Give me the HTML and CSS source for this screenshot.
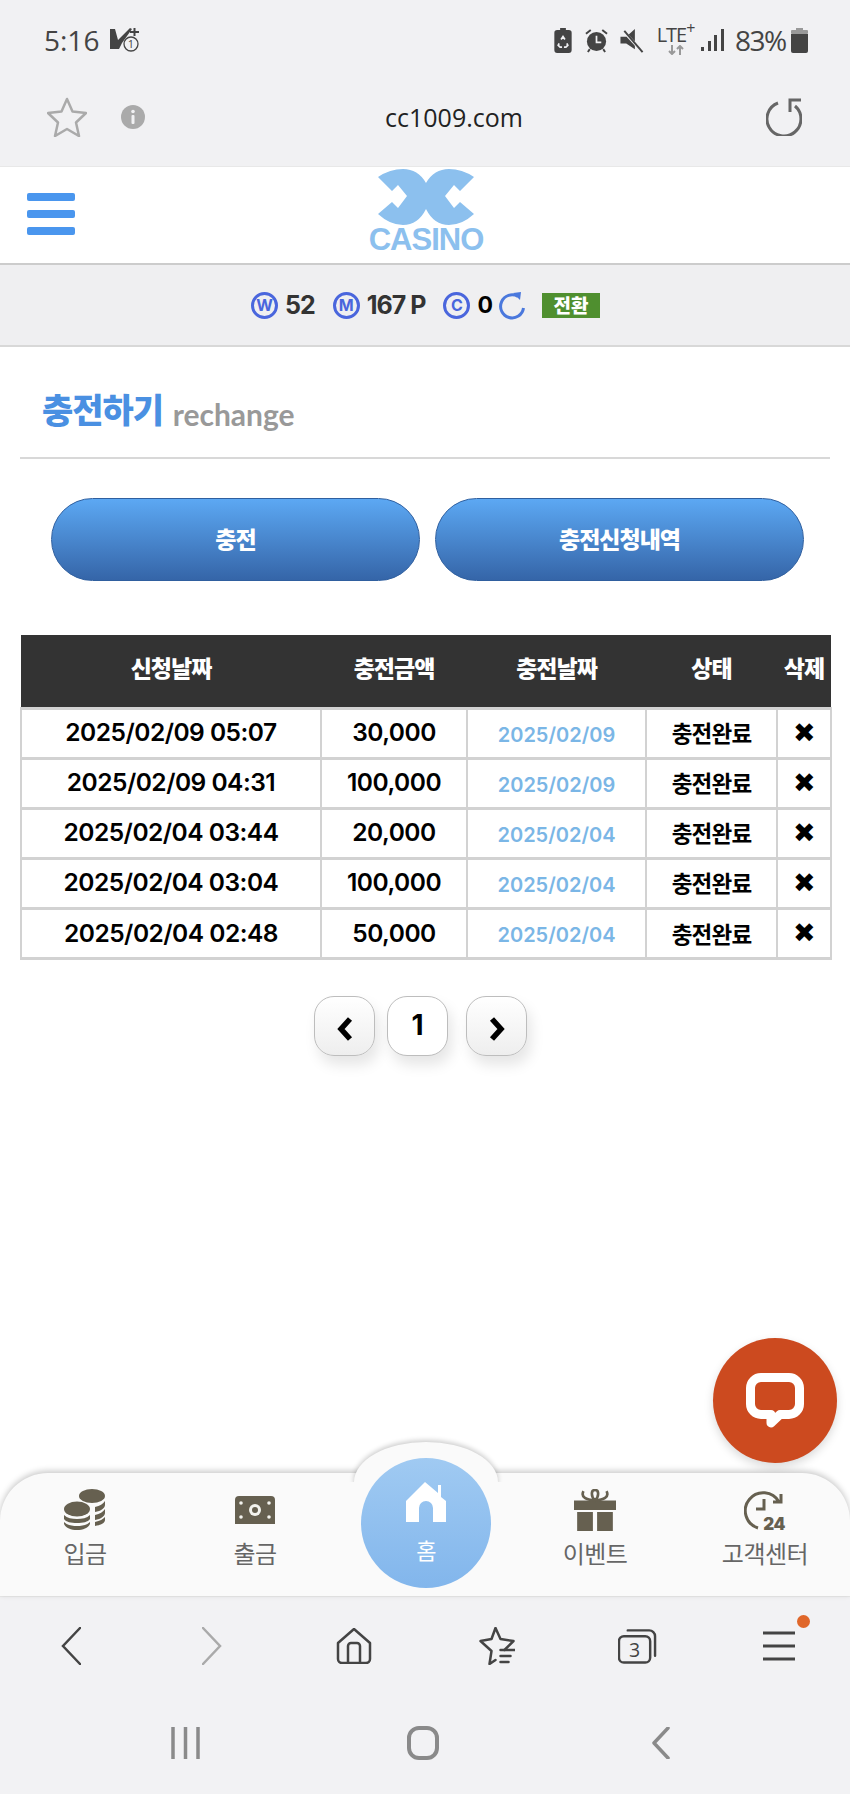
FILE: index.html
```html
<!DOCTYPE html>
<html lang="ko">
<head>
<meta charset="utf-8">
<title>충전하기</title>
<link rel="stylesheet" href="styles.css">
</head>
<body>
<div class="screen">
  <div class="status">
    <div class="status-left">
      <span class="clock">5:16</span>
      <svg class="i-volte" viewBox="0 0 30 24"><path class="dk" d="M0 1h5l3 11L20 0l2 1-10 14-3 6H0z"/><path class="ln" d="M20 4h9M24.500 0v8"/><circle class="ln-thin" cx="21" cy="16" r="7"/><text x="21" y="20" class="t-one">1</text></svg>
    </div>
    <div class="status-right">
      <svg class="i-bat-rec" viewBox="0 0 18 26"><path class="dk" d="M6 0h6v2h3a3 3 0 0 1 3 3v18a3 3 0 0 1-3 3H3a3 3 0 0 1-3-3V5a3 3 0 0 1 3-3h3z"/><path class="wh-ln" d="M7 12l2-3 2 3M5 16l-1 2 2 2h2M13 16l1 2-2 2h-2"/></svg>
      <svg class="i-alarm" viewBox="0 0 24 26"><circle class="dk" cx="12" cy="14" r="10"/><path class="wh-ln" d="M12 8v7h5"/><path class="ln" d="M1 6l5-4M23 6l-5-4M5 22l-2 3M19 22l2 3"/></svg>
      <svg class="i-mute" viewBox="0 0 24 26"><path class="dk" d="M0 9h6l9-8v21l-9-6H0z"/><path class="ln-bg" d="M1 1l22 24"/><path class="ln" d="M4 3l19 22"/></svg>
      <div class="lte"><span class="lte-t">LTE<sup>+</sup></span><svg class="lte-a" viewBox="0 0 16 10"><path d="M4 0v9M1 6l3 3 3-3M12 10V1M9 4l3-3 3 3"/></svg></div>
      <svg class="i-signal" viewBox="0 0 23 22"><rect class="dk" x="0" y="18" width="3" height="4"/><rect class="dk" x="7" y="12" width="3" height="10"/><rect class="dk" x="13" y="6" width="3" height="16"/><rect class="dk" x="20" y="0" width="3" height="22"/></svg>
      <span class="pct">83%</span>
      <svg class="i-bat" viewBox="0 0 17 25"><path class="gy" d="M5 0h7v3H5z"/><rect class="gy" y="2" width="17" height="4" rx="1"/><path class="dk" d="M0 6h17v17a2 2 0 0 1-2 2H2a2 2 0 0 1-2-2z"/></svg>
    </div>
  </div>

  <div class="address">
    <svg class="i-star" viewBox="0 0 40 40"><path d="M20 2l5.500 12.500 13.500 1.500-10 9.500 3 13.500-12-7-12 7 3-13.500-10-9.500 13.500-1.500z"/></svg>
    <svg class="i-info" viewBox="0 0 24 24"><circle cx="12" cy="12" r="12"/><circle class="info-dot" cx="12" cy="6.500" r="1.800"/><rect class="info-dot" x="10.500" y="10" width="3" height="9" rx="1"/></svg>
    <div class="url">cc1009.com</div>
    <svg class="i-reload" viewBox="0 0 36 38"><path d="M12 5A17 17 0 1 0 29 8M35 2H24v12"/></svg>
  </div>

  <header class="site-head">
    <button class="burger" aria-label="메뉴"><i></i><i></i><i></i></button>
    <div class="logo">
      <svg class="logo-mark" viewBox="0 0 96 56"><path d="M0 8Q12 0 25 0 40 0 48 14 56 0 71 0 84 0 96 8L82 22 76 16 67 27 76 39 82 33 96 45Q84 56 71 56 56 56 48 40 40 56 25 56 12 56 0 45L14 33 20 39 29 27 20 16 14 22Z"/></svg>
      <div class="logo-text">CASINO</div>
    </div>
  </header>

  <div class="balance">
    <span class="coin">W</span><b class="amt">52</b>
    <span class="coin c2">M</span><b class="amt">167 P</b>
    <span class="coin c2">C</span><b class="amt zero">0</b>
    <svg class="i-swap" viewBox="0 0 28 28"><path class="swap-a" d="M20 4.500A11.500 11.500 0 1 0 25.500 16"/><path class="swap-h" d="M15 1l8-1-1 8z"/></svg>
    <span class="convert">전환</span>
  </div>

  <main class="content">
    <h1 class="title">충전하기 <small>rechange</small></h1>
    <div class="tabs">
      <a class="tab">충전</a>
      <a class="tab">충전신청내역</a>
    </div>
    <table class="history">
      <colgroup>
        <col class="c-a"><col class="c-b"><col class="c-c"><col class="c-d"><col class="c-e">
      </colgroup>
      <thead>
        <tr><th>신청날짜</th><th>충전금액</th><th>충전날짜</th><th>상태</th><th>삭제</th></tr>
      </thead>
      <tbody>
        <tr><td>2025/02/09 05:07</td><td>30,000</td><td class="d">2025/02/09</td><td class="s">충전완료</td><td class="x">✖</td></tr>
        <tr><td>2025/02/09 04:31</td><td>100,000</td><td class="d">2025/02/09</td><td class="s">충전완료</td><td class="x">✖</td></tr>
        <tr><td>2025/02/04 03:44</td><td>20,000</td><td class="d">2025/02/04</td><td class="s">충전완료</td><td class="x">✖</td></tr>
        <tr><td>2025/02/04 03:04</td><td>100,000</td><td class="d">2025/02/04</td><td class="s">충전완료</td><td class="x">✖</td></tr>
        <tr><td>2025/02/04 02:48</td><td>50,000</td><td class="d">2025/02/04</td><td class="s">충전완료</td><td class="x">✖</td></tr>
      </tbody>
    </table>
    <nav class="pager">
      <a class="pg"><svg class="chev" viewBox="0 0 16 26"><path d="M13 3L4 13l9 10"/></svg></a>
      <a class="pg on">1</a>
      <a class="pg"><svg class="chev" viewBox="0 0 16 26"><path d="M3 3l9 10-9 10"/></svg></a>
    </nav>
  </main>

  <a class="chat" aria-label="채팅"><svg viewBox="0 0 58 56"><path d="M15 4.500h28A10.500 10.500 0 0 1 53.500 15v16A10.500 10.500 0 0 1 43 41.500H34L25 50V41.500h-10A10.500 10.500 0 0 1 4.500 31V15A10.500 10.500 0 0 1 15 4.500z"/></svg></a>

  <nav class="dock">
    <div class="bump"></div>
    <a class="dock-item">
      <svg class="dock-i" viewBox="0 0 42 42"><ellipse class="br" cx="28" cy="7" rx="13" ry="7"/><path class="br" d="M41 12v4c0 3-4 6-10 7v-5c5-1 8-3 10-6zM41 20v4c0 3-4 6-10 7v-5c5-1 8-3 10-6zM41 28v3c0 3-4 5-10 6v-4c5-1 8-3 10-5z"/><ellipse class="br" cx="13" cy="20" rx="13" ry="7.500"/><path class="br" d="M0 26c3 3 8 4 13 4s10-1 13-4v4c-2 3-7 4-13 4S2 33 0 30zM0 33c3 3 8 4 13 4s10-1 13-4v2c-2 4-7 6-13 6S2 39 0 35z"/></svg>
      <span>입금</span>
    </a>
    <a class="dock-item">
      <svg class="dock-i money" viewBox="0 0 40 28"><path class="br" d="M4 0h32a4 4 0 0 1 4 4v24H0V4a4 4 0 0 1 4-4z"/><circle class="bill" cx="20" cy="14" r="6"/><circle class="br" cx="20" cy="14" r="3"/><circle class="bill" cx="6" cy="7" r="1.800"/><circle class="bill" cx="34" cy="7" r="1.800"/><circle class="bill" cx="6" cy="21" r="1.800"/><circle class="bill" cx="34" cy="21" r="1.800"/></svg>
      <span>출금</span>
    </a>
    <a class="dock-item home">
      <svg class="home-i" viewBox="0 0 40 40"><path d="M19 0L32 11V3h3v12l5 4v21H27V26a7 7 0 0 0-14 0v14H0V19z"/></svg>
      <span>홈</span>
    </a>
    <a class="dock-item after-home">
      <svg class="dock-i" viewBox="0 0 40 40"><path class="br" d="M0 11h40v9H0zM3 22h15v18H3zM22 22h15v18H22z"/><path class="ln-br" d="M20 11C12 10 6 8 9 2M20 11c8-1 14-3 11-9M20 11c-4-4-4-10 0-10s4 6 0 10z"/></svg>
      <span>이벤트</span>
    </a>
    <a class="dock-item">
      <svg class="dock-i clock-i" viewBox="0 0 42 47"><path class="ln-br2" d="M14 39A18 18 0 1 1 35 13M29 13h8V5M20 10v10h-8"/><text x="30" y="41" class="t-24">24</text></svg>
      <span>고객센터</span>
    </a>
  </nav>

  <div class="browser">
    <div class="tools">
      <svg class="i-back" viewBox="0 0 20 38"><path d="M19 1L2 19l17 18"/></svg>
      <svg class="i-back off" viewBox="0 0 20 38"><path d="M1 1l17 18L1 37"/></svg>
      <svg class="tool-i" viewBox="0 0 36 36"><path d="M2 15L18 1l16 14v16a4 4 0 0 1-4 4H6a4 4 0 0 1-4-4zM12 35V18a3 3 0 0 1 3-3h6a3 3 0 0 1 3 3v17"/></svg>
      <svg class="tool-i wide" viewBox="0 0 38 38"><path d="M19 1l5 11 13 2-9 9M13 37l2-13-11-10 11-2 4-11M15 24l-2 13 6-4"/><path d="M24 23h14M24 29h10M24 35h8"/></svg>
      <svg class="tool-i wide" viewBox="0 0 40 36"><rect x="1" y="8" width="32" height="27" rx="5"/><path d="M10 2h22a6 6 0 0 1 6 6v20"/><text x="17" y="29" class="t-three">3</text></svg>
      <div class="menu-w">
        <svg class="i-menu" viewBox="0 0 32 30"><path d="M0 2h32M0 15h32M0 28h32"/></svg>
        <i class="dot"></i>
      </div>
    </div>
    <div class="softkeys">
      <svg class="k-recents" viewBox="0 0 29 32"><path d="M2 0v32M14.500 0v32M27 0v32"/></svg>
      <svg class="k-home" viewBox="0 0 32 34"><rect x="2" y="2" width="28" height="30" rx="10"/></svg>
      <svg class="k-back" viewBox="0 0 18 32"><path d="M16 1L2 16l14 15"/></svg>
    </div>
  </div>
</div>
</body>
</html>
```

FILE: styles.css
```css
* { box-sizing: border-box; }
html, body { margin: 0; padding: 0; background: #fff; }
body { font-family: "Noto Sans CJK KR", "Noto Sans", sans-serif; color: #000; }
a { color: inherit; text-decoration: none; }
svg { display: block; flex: none; }

.screen { position: relative; width: 850px; height: 1794px; overflow: hidden; display: flex; flex-direction: column; }

.dk { fill: #444; }
.gy { fill: #999; }
.ln { fill: none; stroke: #444; stroke-width: 2; }
.ln-thin { fill: #f1f1f3; stroke: #444; stroke-width: 1.300; }
.ln-bg { fill: none; stroke: #f1f1f3; stroke-width: 3; }
.wh-ln { fill: none; stroke: #f1f1f3; stroke-width: 1.800; }

/* status bar */
.status { height: 80px; background: #f1f1f3; display: flex; justify-content: space-between; align-items: center; padding: 0 42px 0 44px; }
.status-left { display: flex; align-items: center; gap: 10px; }
.status-right { display: flex; align-items: center; }
.clock { font: 400 28px/1 "Open Sans", sans-serif; color: #444; width: 56px; white-space: nowrap; }
.pct { font: 400 28px/1 "Open Sans", sans-serif; color: #444; width: 51px; margin-right: 5px; white-space: nowrap; letter-spacing: -1.500px; }
.i-volte { width: 30px; height: 24px; }
.t-one { font: 400 11px "Open Sans", sans-serif; fill: #444; text-anchor: middle; }
.i-bat-rec { width: 18px; height: 25px; margin-right: 13px; }
.i-alarm { width: 23px; height: 25px; margin-right: 12px; }
.i-mute { width: 24px; height: 25px; margin-right: 11px; }
.lte { width: 41px; margin-right: 5px; display: flex; flex-direction: column; align-items: center; color: #444; }
.lte-t { font: 400 20px/18px "Open Sans", sans-serif; letter-spacing: -1px; white-space: nowrap; }
.lte-t sup { font-size: 16px; line-height: 0; }
.lte-a { width: 16px; height: 10px; margin-top: 1px; }
.lte-a path { fill: none; stroke: #999; stroke-width: 2; }
.i-signal { width: 23px; height: 22px; margin-right: 11px; }
.i-bat { width: 17px; height: 25px; }

/* address bar */
.address { height: 86px; background: #f1f1f3; display: grid; grid-template-columns: 40px 24px 1fr 36px; column-gap: 34px; align-items: center; padding: 0 48px 12px 47px; }
.i-star { width: 40px; height: 40px; }
.i-star path { fill: none; stroke: #aaa; stroke-width: 2.500; stroke-linejoin: round; }
.i-info { width: 24px; height: 24px; }
.i-info circle:first-child { fill: #aaa; }
.info-dot { fill: #f1f1f3; }
.url { font: 500 25px/1 "Open Sans", sans-serif; color: #222; text-align: center; padding-right: 3px; }
.i-reload { width: 36px; height: 38px; }
.i-reload path { fill: none; stroke: #666; stroke-width: 3; }

/* site header */
.site-head { height: 99px; background: #fff; border-bottom: 2px solid #ccc; border-top: 1px solid #e8e8e8; display: flex; position: relative; padding-left: 27px; align-items: center; }
.burger { border: 0; padding: 0; background: none; width: 48px; display: flex; flex-direction: column; gap: 9px; margin-top: -2px; }
.burger i { display: block; height: 8px; background: #4a96ee; border-radius: 2px; }
.logo { width: 114px; margin-left: 294px; display: flex; flex-direction: column; align-items: center; gap: 3px; margin-top: -11px; }
.logo-mark { width: 96px; height: 56px; }
.logo-mark path { fill: #8cc0ee; }
.logo-text { font: 700 31px/23px "Liberation Sans", sans-serif; color: #8cc0ee; letter-spacing: -1px; white-space: nowrap; }

/* balance */
.balance { height: 82px; background: #efeff1; border-bottom: 2px solid #d8d8d8; display: flex; align-items: center; padding-left: 251px; padding-top: 1px; }
.coin { width: 27px; height: 27px; border: 3px solid #4a66dd; border-radius: 50%; color: #4a66dd; font: 700 16px/21px "Inter", sans-serif; text-align: center; margin-right: 7px; }
.c2 { margin-left: 18px; }
.amt { font: 700 25px/1 "Inter", sans-serif; color: #333; white-space: nowrap; letter-spacing: -1px; }
.zero { color: #000; margin-right: 6px; font-size: 23px; }
.i-swap { width: 28px; height: 28px; }
.swap-a { fill: none; stroke: #4a78dd; stroke-width: 3; }
.swap-h { fill: #4a78dd; }
.convert { margin-left: 16px; width: 58px; height: 25px; background: #4f8f2f; color: #fff; font-weight: 900; font-size: 19px; line-height: 24px; text-align: center; }

/* content */
.content { flex: 1; padding: 0 20px; background: #fff; min-height: 0; }
.title { margin: 0; height: 112px; border-bottom: 2px solid #d8d8d8; padding: 40px 0 0 22px; font-size: 34px; font-weight: 900; line-height: 44px; color: #4a90e2; letter-spacing: -1px; white-space: nowrap; }
.title small { font: 700 30px/44px "Lato", sans-serif; color: #999; letter-spacing: 0; margin-left: 1px; position: relative; top: 3px; }
.tabs { display: flex; gap: 15px; padding: 39px 26px 0 31px; }
.tab { flex: 1; height: 83px; border: 1px solid #2f5f9f; border-radius: 42px; background: linear-gradient(#5ca8f3, #3565a8); color: #fff; font-size: 23px; font-weight: 900; line-height: 79px; text-align: center; letter-spacing: -1px; }

.history { width: 810px; margin-top: 54px; table-layout: fixed; border-collapse: collapse; }
.c-a { width: 300px; } .c-b { width: 146px; } .c-c { width: 179px; } .c-d { width: 131px; } .c-e { width: 54px; }
.history th { height: 73px; background: #333; color: #fff; font-size: 23px; font-weight: 900; letter-spacing: -1px; padding: 0 0 8px; white-space: nowrap; }
.history td { height: 50.200px; border-style: solid; border-color: #d2d2d2; border-width: 3px 2px; background: #fff; text-align: center; font: 600 24.500px/1 "Inter", sans-serif; color: #000; padding: 0 0 2px; white-space: nowrap; letter-spacing: -.5px; }
.history td.d { font: 600 20px/1 "Inter", sans-serif; color: #7ab6e6; padding: 3px 0 0; letter-spacing: 0; }
.history td.s { font: 700 22.500px/1 "Noto Sans CJK KR", sans-serif; letter-spacing: -.8px; }
.history td.x { font: 400 27px/1 "DejaVu Sans", sans-serif; }

.pager { display: flex; justify-content: center; gap: 12px; margin-top: 36px; padding-right: 9px; }
.pg { width: 61px; height: 60px; border: 1px solid #bdbdbd; border-radius: 20px; background: linear-gradient(#fff, #eee); box-shadow: 4px 9px 14px rgba(0,0,0,.1); display: flex; align-items: center; justify-content: center; font: 700 28px/1 "Inter", sans-serif; padding-bottom: 3px; }
.pg.on { background: #fff; }
.pg + .pg + .pg { margin-left: 6px; }
.chev { width: 16px; height: 26px; margin-top: 9px; }
.chev path { fill: none; stroke: #000; stroke-width: 5.500; }

/* floating chat */
.chat { position: absolute; left: 713px; top: 1338px; width: 124px; height: 125px; border-radius: 50%; background: #cc4a1f; box-shadow: 0 4px 10px rgba(0,0,0,.15); display: flex; align-items: center; justify-content: center; }
.chat svg { width: 58px; height: 56px; }
.chat path { fill: none; stroke: #fff; stroke-width: 9; stroke-linejoin: round; }

/* dock */
.dock { position: relative; height: 123px; background: #fafafa; border-radius: 48px 48px 0 0; box-shadow: 0 -2px 6px rgba(0,0,0,.22); display: grid; grid-template-columns: repeat(5, 170px); }
.bump { position: absolute; left: 354px; top: -31px; width: 144px; height: 80px; border-radius: 50%; background: #fafafa; box-shadow: 0 -2px 5px rgba(0,0,0,.2); clip-path: inset(-10px -10px 40px -10px); }
.dock-item { position: relative; display: flex; flex-direction: column; align-items: center; padding-top: 16px; font-size: 24px; line-height: 30px; color: #666; white-space: nowrap; }
.after-home { grid-column-start: 4; }
.dock-item span { position: absolute; top: 65px; letter-spacing: -.5px; }
.dock-i { width: 42px; height: 42px; }
.dock-i.clock-i { height: 47px; }
.money { width: 40px; height: 28px; margin-top: 7px; }
.br { fill: #666050; }
.bill { fill: #f3f3ee; }
.ln-br { fill: none; stroke: #666050; stroke-width: 2.500; }
.ln-br2 { fill: none; stroke: #666050; stroke-width: 3; }
.t-24 { font: 900 17px "Inter", sans-serif; fill: #666050; text-anchor: middle; letter-spacing: -.5px; }
.home { position: absolute; left: 361px; top: -15px; width: 130px; height: 130px; border-radius: 50%; background: linear-gradient(#a0caf2, #82b6ec); color: #fff; padding-top: 24px; }
.dock-item.home span { top: 76px; font-size: 22px; }
.home-i { width: 40px; height: 40px; }
.home-i path { fill: #fff; }

/* browser chrome */
.browser { height: 198px; background: #f2f2f4; border-top: 1px solid #eaeaea; }
.tools { height: 98px; display: grid; grid-template-columns: repeat(6, 1fr); justify-items: center; align-items: center; }
.i-back { width: 20px; height: 38px; }
.i-back path { fill: none; stroke: #444; stroke-width: 2.500; stroke-linecap: round; }
.i-back.off path { stroke: #aaa; }
.tool-i { width: 36px; height: 36px; }
.tool-i.wide { width: 39px; height: 38px; }
.tool-i path, .tool-i rect { fill: none; stroke: #444; stroke-width: 2.500; stroke-linecap: round; stroke-linejoin: round; }
.t-three { font: 400 20px "Open Sans", sans-serif; fill: #444; text-anchor: middle; }
.menu-w { position: relative; }
.i-menu { width: 32px; height: 30px; }
.i-menu path { stroke: #444; stroke-width: 3; stroke-linecap: round; }
.dot { position: absolute; left: 34px; top: -16px; width: 13px; height: 13px; border-radius: 50%; background: #e0672a; }
.softkeys { display: grid; grid-template-columns: repeat(3, 238px); justify-content: center; justify-items: center; align-items: center; padding: 31px 4px 0 0; }
.k-recents { width: 29px; height: 32px; }
.k-home { width: 32px; height: 34px; }
.k-back { width: 18px; height: 32px; }
.softkeys path, .softkeys rect { fill: none; stroke: #8a8a8a; stroke-width: 3.500; stroke-linecap: round; stroke-linejoin: round; }
.k-home rect { stroke-width: 4; }
```
